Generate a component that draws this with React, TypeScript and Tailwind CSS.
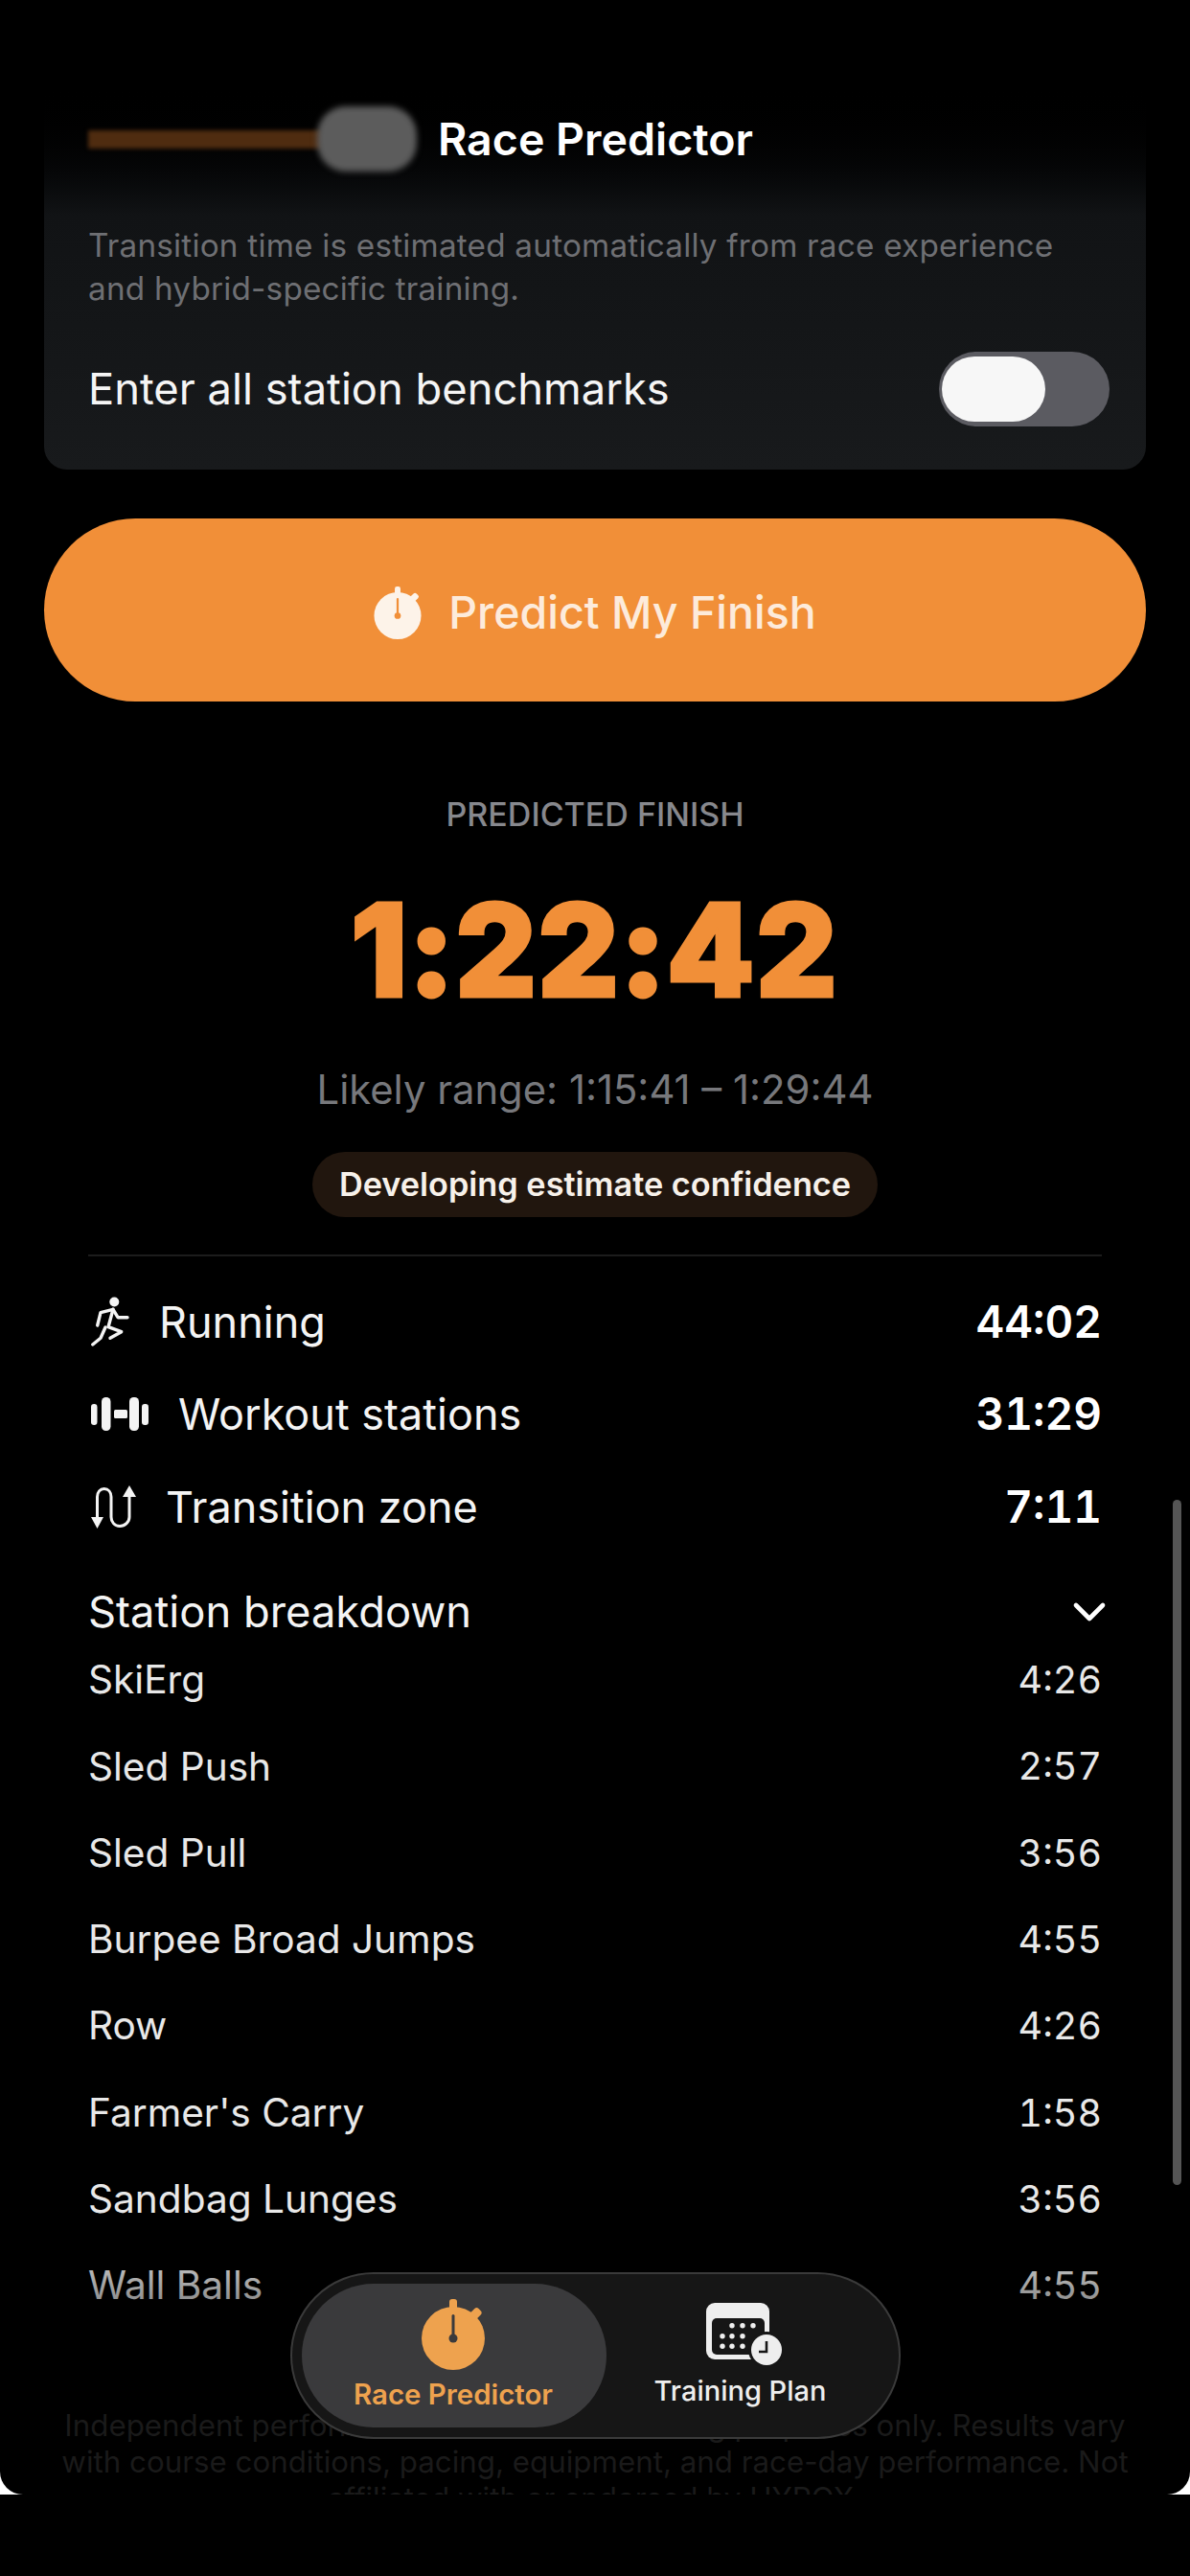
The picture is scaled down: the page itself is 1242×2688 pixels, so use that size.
import { ChevronDown } from 'lucide-react';

const summary = [
  { label: 'Running', value: '44:02', icon: <Runner /> },
  { label: 'Workout stations', value: '31:29', icon: <Dumbbell /> },
  { label: 'Transition zone', value: '7:11', icon: <TransitionArrows /> },
];

const stations = [
  ['SkiErg', '4:26'],
  ['Sled Push', '2:57'],
  ['Sled Pull', '3:56'],
  ['Burpee Broad Jumps', '4:55'],
  ['Row', '4:26'],
  ["Farmer's Carry", '1:58'],
  ['Sandbag Lunges', '3:56'],
  ['Wall Balls', '4:55'],
];

function Stopwatch({ className, hand }: { className: string; hand: string }) {
  return (
    <svg viewBox="0 0 66 74" className={className}>
      <rect x="29" y="0" width="8" height="12" rx="3" fill="currentColor" />
      <rect x="52" y="9" width="9" height="12" rx="3" transform="rotate(45 56 15)" fill="currentColor" />
      <circle cx="33" cy="41" r="33" fill="currentColor" />
      <rect x="31.5" y="16" width="3" height="26" rx="1.5" fill={hand} />
      <circle cx="33" cy="41" r="4.5" fill={hand} />
    </svg>
  );
}

function Runner() {
  return (
    <svg viewBox="0 0 40 52" className="w-[40px] h-[52px]" fill="none" stroke="currentColor" strokeWidth="3.4" strokeLinecap="round" strokeLinejoin="round">
      <circle cx="24.3" cy="5.5" r="5" fill="currentColor" stroke="none" />
      <path d="M6.7 30 L10 16.7 L23 13.3 L28 21.7 L38 21.7" />
      <path d="M23 13.3 L18 31.7 L31.7 36.7 L20 43.3" />
      <path d="M15 32 L10 43.3 L1.8 50" />
    </svg>
  );
}

function Dumbbell() {
  return (
    <svg viewBox="0 0 60 35" className="w-[60px] h-[35px]" fill="currentColor">
      <rect x="0" y="7" width="6.5" height="22" rx="3.2" />
      <rect x="11" y="0" width="9.5" height="35" rx="4.5" />
      <rect x="24" y="13" width="14" height="9" rx="1.5" />
      <rect x="40" y="0" width="10" height="35" rx="4.5" />
      <rect x="53" y="7" width="7" height="22" rx="3.2" />
    </svg>
  );
}

function TransitionArrows() {
  return (
    <svg viewBox="0 0 47 45" className="w-[47px] h-[45px]" fill="none" stroke="currentColor" strokeWidth="3" strokeLinecap="round">
      <path d="M6.5 35 V12 C6.5 7 9.5 3.5 13.7 3.5 C18 3.5 21 7 21 12 V33 C21 38 24.5 42.5 30 42.5 C35.5 42.5 40 38 40 33 V10" />
      <path d="M0 33 H13 L6.5 45 Z" fill="currentColor" stroke="none" />
      <path d="M33 12 H47 L40 0 Z" fill="currentColor" stroke="none" />
    </svg>
  );
}

function CalendarClock() {
  return (
    <svg viewBox="0 0 80 66" className="w-[80px] h-[66px]">
      <rect x="0" y="0" width="66" height="59" rx="9" fill="#eeeeee" />
      <rect x="6" y="16" width="55" height="38" rx="5" fill="#161616" />
      <g fill="#eeeeee">
        {[27, 38, 49].map((x) => <circle key={x} cx={x} cy="23.7" r="2.7" />)}
        {[17, 27, 38].map((x) => <circle key={x} cx={x} cy="34.7" r="2.7" />)}
        {[17, 27, 38].map((x) => <circle key={x} cx={x} cy="45.3" r="2.7" />)}
      </g>
      <circle cx="63" cy="49" r="19" fill="#161616" />
      <circle cx="63" cy="49" r="16" fill="#eeeeee" />
      <path d="M63 40 V51 H55" fill="none" stroke="#161616" strokeWidth="2.6" />
    </svg>
  );
}

export default function App() {
  return (
    <div className="bg-black h-[2688px] overflow-hidden font-[Inter,sans-serif] antialiased">
      <div className="bg-white h-[2603px]">
        <div className="relative h-full bg-black rounded-b-[24px] overflow-hidden">
          <div className="pt-[82px] px-[46px]">
            {/* settings card */}
            <section className="h-[408px] rounded-[24px] bg-linear-to-b from-black via-[#111315] via-35% to-[#181a1c] px-[46px]">
              <div className="relative flex items-center h-[126px]">
                <div className="w-[245px] h-[19px] bg-[#4f2c10] blur-[2px]" />
                <div className="w-[104px] h-[68px] -ml-[6px] rounded-[30px] bg-[#5c5c5c] blur-[3px]" />
                <h2 className="ml-[22px] text-[46.5px] font-semibold text-white leading-none">Race Predictor</h2>
              </div>
              <p className="mt-[26px] max-w-[1030px] text-[33.3px] tracking-[0.2px] leading-[45px] text-[#6e6f73]">
                Transition time is estimated automatically from race experience and hybrid-specific training.
              </p>
              <div className="flex items-center justify-between mt-[43px] -mr-[8px]">
                <span className="text-[45.3px] text-[#f5f5f5]">Enter all station benchmarks</span>
                <div className="flex items-center w-[178px] h-[78px] rounded-full bg-[#5b5b61] px-[3px]">
                  <div className="w-[108px] h-[68px] rounded-full bg-[#f7f7f7]" />
                </div>
              </div>
            </section>

            <button className="flex items-center justify-center gap-[28px] w-full h-[191px] mt-[51px] pt-[6px] rounded-[96px] bg-[#f18f38] text-[#fdebdb]">
              <Stopwatch className="w-[50px] h-[55px] text-[#fdf3e9]" hand="#f18f38" />
              <span className="text-[46.5px] font-medium">Predict My Finish</span>
            </button>
          </div>

          {/* prediction */}
          <div className="flex flex-col items-center mt-[94px]">
            <p className="text-[34px] leading-[48px] font-medium text-[#87888d]">PREDICTED FINISH</p>
            <p className="mt-[52px] text-[132px] tracking-[2px] leading-[130px] font-extrabold text-[#f18f38] [-webkit-text-stroke:5px_#f18f38] [stroke-linejoin:round] [paint-order:stroke]">1:22:42</p>
            <p className="mt-[56px] text-[41.8px] leading-[50px] text-[#77787c]">Likely range: 1:15:41 – 1:29:44</p>
            <div className="flex items-center h-[68px] mt-[40px] px-[28px] rounded-full bg-[#21160e] text-[34.3px] font-semibold text-[#f7f1ea]">
              Developing estimate confidence
            </div>
          </div>

          <div className="mx-[92px] mt-[39px] h-[2px] bg-[#1c1c1c]" />

          {/* totals */}
          <ul className="mx-[92px] mt-[20px]">
            {summary.map((row) => (
              <li key={row.label} className="flex items-center justify-between h-[96.5px] text-[#f4f4f4]">
                <span className="flex items-center gap-[31px] pl-[3px]">
                  {row.icon}
                  <span className="text-[45px]">{row.label}</span>
                </span>
                <span className="text-[46px] font-semibold text-white tabular-nums">{row.value}</span>
              </li>
            ))}
          </ul>

          <div className="flex items-center justify-between mx-[92px] h-[54px] mt-[34px] text-[#f4f4f4]">
            <span className="text-[45.3px]">Station breakdown</span>
            <ChevronDown className="w-[56px] h-[56px] text-white -mr-[15px]" strokeWidth={2} />
          </div>

          <ul className="mx-[92px]">
            {stations.map(([name, time]) => (
              <li key={name} className="flex items-center justify-between h-[90.3px] text-[40.6px] text-[#e8e8e8]">
                <span>{name}</span>
                <span className="text-[39.5px] tabular-nums">{time}</span>
              </li>
            ))}
          </ul>

          <p className="absolute top-[2512px] inset-x-[46px] text-center text-[31.3px] leading-[38px] text-[#1a1a1a]">
            Independent performance estimate for training purposes only. Results vary with course conditions, pacing, equipment, and race-day performance. Not affiliated with or endorsed by HYROX.
          </p>

          {/* fade under the floating tab bar */}
          <div className="absolute top-[2330px] inset-x-0 h-[130px] bg-linear-to-b from-transparent to-black/70" />

          {/* scrollbar */}
          <div className="absolute top-[1565px] right-[9px] w-[9px] h-[715px] rounded-full bg-[#555555]" />

          {/* tab bar */}
          <nav className="absolute top-[2371px] left-[303px] flex w-[637px] h-[174px] p-[10px] rounded-[87px] bg-[#161616] border-2 border-[#3a3a3a]">
            <div className="flex flex-col items-center justify-center w-[318px] rounded-[76px] bg-[#3a3a3c] pr-[2px] text-[#eea24e]">
              <Stopwatch className="w-[66px] h-[74px]" hand="#3a3a3c" />
              <span className="mt-[8px] text-[29.4px] leading-[36px] font-semibold">Race Predictor</span>
            </div>
            <div className="flex flex-col items-center justify-center flex-1 pr-[16px] text-[#eeeeee]">
              <div className="ml-[8px]">
                <CalendarClock />
              </div>
              <span className="mt-[8px] text-[29px] leading-[36px] font-medium">Training Plan</span>
            </div>
          </nav>
        </div>
      </div>
    </div>
  );
}
